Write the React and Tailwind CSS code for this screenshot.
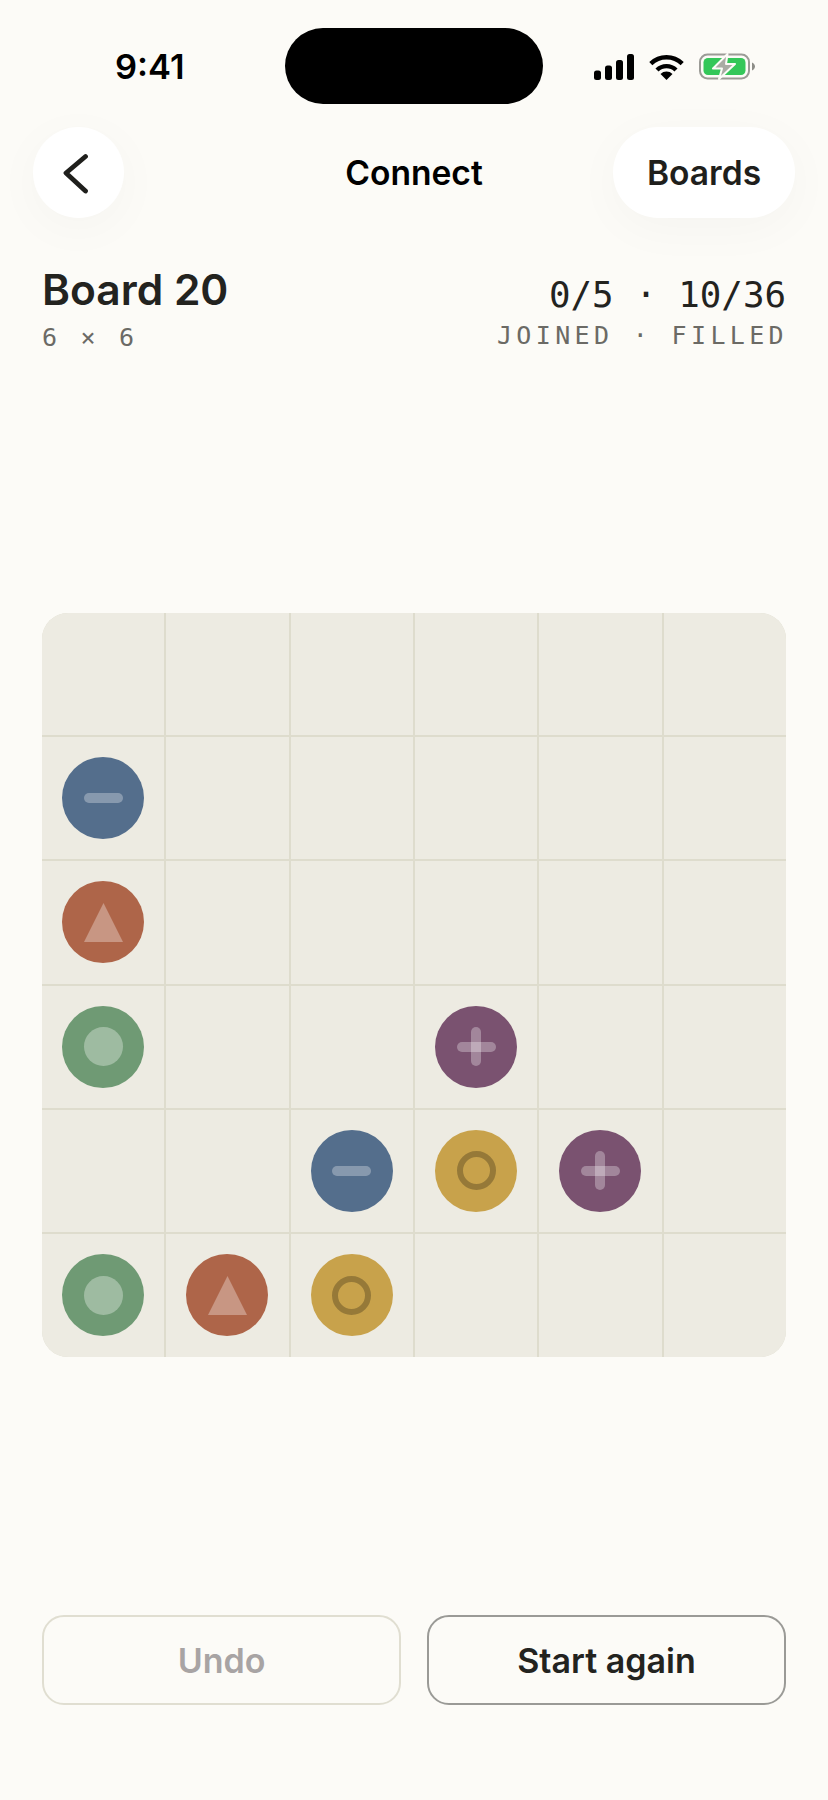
import React from "react";

const sans = "font-['Inter',sans-serif]";
const mono = "font-['DejaVu_Sans_Mono',monospace]";

// row by row, "." is an empty cell
const board = [
  "......",
  "b.....",
  "r.....",
  "g..p..",
  "..byp.",
  "gry...",
];

const pieceColors = {
  b: "bg-[#546e8c]",
  r: "bg-[#ae6549]",
  g: "bg-[#6f9a74]",
  p: "bg-[#7a5270]",
  y: "bg-[#c8a24b]",
};

const Mark = ({ type }) => {
  if (type === "b") {
    return <div className="h-[10px] w-[39px] rounded-full bg-white/30" />;
  }
  if (type === "p") {
    return (
      <div className="relative h-[39px] w-[39px]">
        <div className="absolute left-0 top-[14.5px] h-[10px] w-[39px] rounded-full bg-white/30" />
        <div className="absolute left-[14.5px] top-0 h-[39px] w-[10px] rounded-full bg-white/30" />
      </div>
    );
  }
  if (type === "r") {
    return (
      <svg width="39" height="39" viewBox="0 0 39 39">
        <polygon points="19.5,0 39,39 0,39" fill="#ffffff" fillOpacity="0.32" />
      </svg>
    );
  }
  if (type === "g") {
    return <div className="h-[39px] w-[39px] rounded-full bg-white/33" />;
  }
  return <div className="h-[39px] w-[39px] rounded-full border-[6px] border-black/25" />;
};

const Piece = ({ type }) => (
  <div className={`flex h-[82px] w-[82px] items-center justify-center rounded-full ${pieceColors[type]}`}>
    <Mark type={type} />
  </div>
);

const StatusIcons = () => (
  <div className="flex items-center">
    <svg width="40" height="26" viewBox="0 0 40 26" fill="#000000">
      <rect x="0" y="16.5" width="7" height="9.5" rx="2.5" />
      <rect x="11" y="11.5" width="7" height="14.5" rx="2.5" />
      <rect x="22" y="6" width="7" height="20" rx="2.5" />
      <rect x="33" y="0" width="7" height="26" rx="2.5" />
    </svg>
    <svg className="ml-[15px]" width="35" height="26" viewBox="0 0 35 26">
      <path d="M1.8 9.6 A 22.5 22.5 0 0 1 33.2 9.6" fill="none" stroke="#000000" strokeWidth="4.4" />
      <path d="M8 16 A 13.5 13.5 0 0 1 27 16" fill="none" stroke="#000000" strokeWidth="4.4" />
      <path d="M17.5 26 L11.5 20 A 8.5 8.5 0 0 1 23.5 20 Z" fill="#000000" />
    </svg>
    <svg className="ml-[15px]" width="56" height="27" viewBox="0 0 56 27">
      <rect x="1" y="1.5" width="49" height="24" rx="7.5" fill="none" stroke="#9b9b96" strokeWidth="2" />
      <rect x="4.5" y="5" width="42" height="17" rx="4.5" fill="#34c759" />
      <path d="M53 9.5 C55 10.5 56 12 56 13.5 C56 15 55 16.5 53 17.5 Z" fill="#8d8d88" />
      <path
        d="M28.5 1 L14 15.5 L23 15.5 L20 26 L36 11 L27 11 Z"
        fill="#a9aca4"
        stroke="#fcfbf7"
        strokeWidth="2"
        strokeLinejoin="round"
      />
    </svg>
  </div>
);

export default function App() {
  return (
    <div className={`flex h-[1800px] w-[828px] flex-col bg-[#fcfbf7] ${sans}`}>
      <div className="relative h-[127px] shrink-0">
        <div className="absolute left-[115px] top-[46px] text-[34.5px] leading-[42px] font-semibold text-black">9:41</div>
        <div className="absolute left-[285px] top-[28px] h-[76px] w-[258px] rounded-full bg-black" />
        <div className="absolute left-[594px] top-[53px]">
          <StatusIcons />
        </div>
      </div>

      <div className="relative flex h-[91px] shrink-0 items-center justify-between pl-[33px] pr-[33px]">
        <button className="flex h-[91px] w-[91px] items-center justify-center rounded-full bg-white shadow-[0_10px_50px_rgba(0,0,0,0.03)]">
          <svg width="32" height="46" viewBox="0 0 32 46" fill="none" stroke="#1f1f1c" strokeWidth="4.8" strokeLinecap="round" strokeLinejoin="round">
            <path d="M22.5 6.5 L3 23 L22.5 41" />
          </svg>
        </button>
        <div className="absolute left-0 right-0 pt-[1px] text-center text-[33.6px] leading-[44px] font-semibold text-black">Connect</div>
        <button className="relative h-[91px] w-[182px] rounded-full bg-white pt-[1px] text-[33.6px] font-semibold text-[#1f1f1c] shadow-[0_10px_50px_rgba(0,0,0,0.03)]">
          Boards
        </button>
      </div>

      <div className="mt-[48px] flex shrink-0 items-start justify-between px-[42px] pb-[1px]">
        <div>
          <div className="text-[42.5px] leading-[48px] font-semibold text-[#23231f]">Board 20</div>
          <div className={`${mono} mt-[9px] text-[25px] leading-[30px] tracking-[4.2px] text-[#6b6a65]`}>6 × 6</div>
        </div>
        <div className={`${mono} text-right`}>
          <div className="mt-[7px] text-[35.8px] leading-[44px] text-[#23231f]">0/5 · 10/36</div>
          <div className="mr-[-2px] mt-[3.5px] text-[25px] leading-[30px] tracking-[4.35px] text-[#6b6a65]">JOINED · FILLED</div>
        </div>
      </div>

      <div className="flex flex-1 items-center justify-center">
        <div className="grid h-[744px] w-[744px] grid-cols-6 grid-rows-6 gap-[2px] overflow-hidden rounded-[26px] bg-[#dedccd]">
          {board.flatMap((row, r) =>
            row.split("").map((cell, c) => (
              <div key={`${r}-${c}`} className="flex items-center justify-center bg-[#edebe2]">
                {cell !== "." && <Piece type={cell} />}
              </div>
            ))
          )}
        </div>
      </div>

      <div className="flex shrink-0 gap-[26px] px-[42px] pb-[95px]">
        <button className="h-[90px] flex-1 rounded-[22px] border-2 border-[#e0ded1] pt-[1px] text-[34px] font-semibold text-[#a8a4a4]">Undo</button>
        <button className="h-[90px] flex-1 rounded-[22px] border-2 border-[#9a9a96] pt-[1px] text-[34px] font-semibold text-[#23231f]">Start again</button>
      </div>
    </div>
  );
}
